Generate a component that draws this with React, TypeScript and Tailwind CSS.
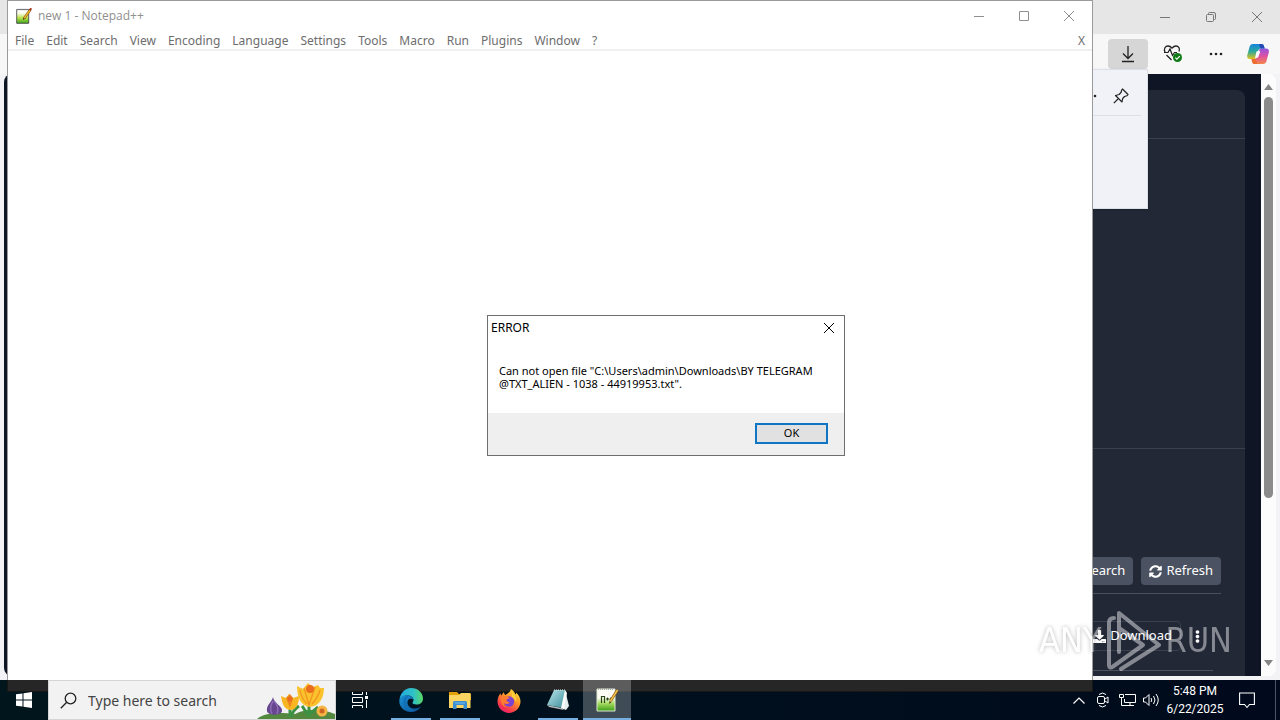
import React from 'react';
import { FaSyncAlt, FaSearch, FaDownload, FaEllipsisV } from 'react-icons/fa';

const MENUS = ['File', 'Edit', 'Search', 'View', 'Encoding', 'Language', 'Settings', 'Tools', 'Macro', 'Run', 'Plugins', 'Window', '?'];

const MinimizeIcon = () => (
  <svg width="10" height="10" viewBox="0 0 10 10" stroke="currentColor" fill="none"><path d="M0 5.5h10" /></svg>
);

const MaximizeIcon = () => (
  <svg width="10" height="10" viewBox="0 0 10 10" stroke="currentColor" fill="none"><path d="M.5.5h9v9h-9z" /></svg>
);

const RestoreIcon = () => (
  <svg width="10" height="10" viewBox="0 0 10 10" stroke="currentColor" fill="none">
    <rect x=".5" y="2.5" width="7" height="7" rx="1" />
    <path d="M2.5 2V1.500Q2.500 .5 3.500 .5H8Q9.500 .5 9.500 2V6.500Q9.500 7.500 8.500 7.500H8" />
  </svg>
);

const CloseIcon = () => (
  <svg width="10" height="10" viewBox="0 0 10 10" stroke="currentColor" fill="none"><path d="M0 0l10 10M10 0L0 10" /></svg>
);

const NotepadPlusSmall = () => (
  <svg width="16" height="16" viewBox="0 0 16 16">
    <defs>
      <linearGradient id="nppSmall" x1="0" y1="0" x2="0" y2="1">
        <stop offset=".25" stopColor="#fdfdf5" />
        <stop offset=".6" stopColor="#b9e34a" />
        <stop offset="1" stopColor="#3fa51c" />
      </linearGradient>
    </defs>
    <path d="M.7 1.500h12v13.800H.7z" fill="url(#nppSmall)" stroke="#4b4b4b" strokeWidth=".9" />
    <path d="M1.500 1.500h10.500" stroke="#8c8c9c" strokeWidth="1.600" strokeDasharray="1 1" />
    <path d="M14.500 1.500L8 10.500" stroke="#7d4d12" strokeWidth="2.400" />
    <path d="M14.500 1.500L8 10.500" stroke="#f3b92c" strokeWidth="1.300" />
    <path d="M13.800 2.300l1.400-2" stroke="#a53122" strokeWidth="2" />
    <path d="M7 12l.4-2.200 1.500 1z" fill="#3b2a10" />
  </svg>
);

const NotepadPlusLarge = () => (
  <svg width="24" height="24" viewBox="0 0 24 24">
    <defs>
      <linearGradient id="nppLarge" x1="0" y1="0" x2="0" y2="1">
        <stop offset=".4" stopColor="#fbfcf4" />
        <stop offset=".65" stopColor="#a8dc62" />
        <stop offset="1" stopColor="#3c9f17" />
      </linearGradient>
    </defs>
    <path d="M2 1h18v22H2z" fill="url(#nppLarge)" stroke="#dfe8d6" />
    <path d="M3 1.500h16" stroke="#a5a5aa" strokeDasharray="1 1" />
    <path d="M6.500 8v7M6.500 8.500h3V15M11 11h3M12.500 9.500v3M14.500 11h3M16 9.500v3" fill="none" stroke="#294416" strokeWidth="1.200" />
    <path d="M22.500 2l-7 11" stroke="#8a5716" strokeWidth="2.800" />
    <path d="M22.500 2l-7 11" stroke="#f3c04a" strokeWidth="1.500" />
    <path d="M14 16l.5-3 2 1.200z" fill="#55400f" />
  </svg>
);

const DotsIcon = () => (
  <svg width="14" height="4" viewBox="0 0 14 4" fill="#222"><circle cx="2" cy="2" r="1.300" /><circle cx="7" cy="2" r="1.300" /><circle cx="12" cy="2" r="1.300" /></svg>
);

const DownloadArrow = () => (
  <svg width="14" height="18" viewBox="0 0 14 18" fill="none" stroke="#222" strokeWidth="1.300">
    <path d="M7 1v12.500M2 8.500l5 5 5-5M1 16.500h12" />
  </svg>
);

const HealthIcon = () => (
  <svg width="20" height="18" viewBox="0 0 20 18" fill="none">
    <path d="M2 7.500C.3 3.500 2.500 1 5 1c2 0 3 1 4 2.200C10 2 11 1 13 1c2.500 0 4.300 2.500 3 5.500M3.500 10L8.500 15" stroke="#222" strokeWidth="1.300" />
    <path d="M1 7.500h4l2-3.500 2.500 6.500L11.500 7.500h2.500" stroke="#222" strokeWidth="1.200" />
    <circle cx="14.500" cy="12.500" r="4.500" fill="#0f7b16" />
    <path d="M12.300 12.700l1.600 1.500 2.900-3" stroke="#fff" strokeWidth="1.100" />
  </svg>
);

const CopilotIcon = () => (
  <svg width="22" height="20" viewBox="0 0 22 20">
    <defs>
      <linearGradient id="copA" x1="0" y1="0" x2="0" y2="1">
        <stop offset="0" stopColor="#1683df" />
        <stop offset=".5" stopColor="#2ea99a" />
        <stop offset="1" stopColor="#e2c31c" />
      </linearGradient>
      <linearGradient id="copB" x1="0" y1="0" x2="0" y2="1">
        <stop offset="0" stopColor="#9252e3" />
        <stop offset=".5" stopColor="#e0519f" />
        <stop offset="1" stopColor="#f4884a" />
      </linearGradient>
    </defs>
    <path d="M6 0h8.500c1.500 0 2 .8 2.400 2l.8 2.500h-3.500c-2 0-2.700 1-3.300 3l-1.700 5.500c-.4 1.500-1.200 2-2.500 2H3C.5 15-.2 13 .3 11L2.500 3C3 1 4 0 6 0z" fill="url(#copA)" />
    <path d="M16 20H8c-1.700 0-2.400-.8-2.800-2.300L4.500 15h2.700c1.700 0 2.500-1 3-2.700l1.800-6C12.500 5 13.200 4.500 14.500 4.500H19c2.500 0 3.300 2 2.800 4L19.500 17c-.5 2-1.500 3-3.500 3z" fill="url(#copB)" />
    <path d="M12 0h2.500c1.500 0 2 .8 2.400 2l.8 2.500h-4.200z" fill="#2448b6" />
    <path d="M9.500 7.500l3-1 .5 2-2 5L8 14z" fill="#fff" />
    <path d="M4.500 15h4l2 5H8c-1.700 0-2.400-.8-2.800-2.300z" fill="#ee6c2f" />
  </svg>
);

const PinIcon = () => (
  <svg width="16" height="16" viewBox="0 0 16 16" fill="none" stroke="#222" strokeWidth="1.200" strokeLinejoin="round">
    <path d="M9.500 1l5.500 5.500-1 1.200-2.500.8-1.800 2-.7 3.500-6.500-6.500 3.500-1 2-2 .7-2.500zM5 11L.8 15.200" />
  </svg>
);

function BrowserWindow() {
  return (
    <section className="flex min-h-0 flex-1 flex-col bg-[#f3f3f5]" aria-label="Browser">
      <div className="flex h-[34px] justify-end bg-[#e6e6e6] text-[#777]">
        <button aria-label="Minimize" className="flex w-[46px] items-center justify-center"><MinimizeIcon /></button>
        <button aria-label="Restore" className="flex w-[46px] items-center justify-center"><RestoreIcon /></button>
        <button aria-label="Close" className="flex w-[46px] items-center justify-center"><CloseIcon /></button>
      </div>
      <div className="flex h-10 items-center justify-end gap-1 bg-[#f7f7f7] pr-1">
        <button aria-label="Downloads" className="flex h-[30px] w-10 items-center justify-center rounded bg-[#d6d6d6]"><DownloadArrow /></button>
        <button aria-label="Browser essentials" className="flex h-[30px] w-10 items-center justify-center pl-0.5"><HealthIcon /></button>
        <button aria-label="Settings and more" className="flex h-[30px] w-10 items-center justify-center"><DotsIcon /></button>
        <button aria-label="Copilot" className="flex h-[30px] w-9 items-center justify-center"><CopilotIcon /></button>
      </div>

      <div className="mr-1 mb-1 ml-1 flex min-h-0 flex-1 overflow-hidden rounded-lg bg-white">
        <div className="flex min-w-0 flex-1 flex-col bg-[#0f1524] px-4 pt-4">
          <div className="flex min-h-0 flex-1 flex-col rounded-t-lg bg-[#222836] text-white">
            <div className="h-[49px] shrink-0 border-b border-[#3a404e]" />
            <div className="h-[310px] shrink-0 border-b border-[#3a404e]" />
            <div className="flex min-h-0 flex-1 flex-col px-6 pt-[108px] text-[13px]">
              <div className="flex justify-end gap-2 border-b border-[#4a505e] pb-2">
                <button className="flex h-7 items-center gap-1 rounded bg-[#4b5261] px-2"><FaSearch size={13} />Search</button>
                <button className="flex h-7 items-center gap-1 rounded bg-[#4b5261] px-2"><FaSyncAlt size={13} />Refresh</button>
              </div>
              <div className="mr-2 flex items-center justify-end border-b border-[#4a505e] pt-[27px] pb-[19px]">
                <button className="flex h-[30px] items-center gap-1 rounded border border-[#3a404e] px-2"><FaDownload size={13} />Download</button>
                <button aria-label="More" className="flex h-[30px] w-8 items-center justify-center"><FaEllipsisV size={13} /></button>
              </div>
            </div>
          </div>
        </div>
        <div className="flex w-[15px] flex-col items-center bg-[#fcfcfc] pt-2.5 pb-2.5">
          <svg width="9" height="6" viewBox="0 0 9 6" fill="#858585"><path d="M4.500 0L9 6H0z" /></svg>
          <div className="mt-[7px] h-[401px] w-[9px] rounded-full bg-[#8b8b8b]" />
          <svg className="mt-auto" width="9" height="6" viewBox="0 0 9 6" fill="#858585"><path d="M4.500 6L0 0h9z" /></svg>
        </div>
      </div>
    </section>
  );
}

function DownloadsFlyout() {
  return (
    <div className="absolute top-[69px] right-[132px] h-[140px] w-[360px] border border-[#dcdfe4] bg-[#f0f2f7] pr-1.5 shadow-sm">
      <div className="flex h-[46px] items-center justify-end gap-4 border-b border-[#dde0e6] pt-1.5 pr-3">
        <DotsIcon />
        <button aria-label="Pin downloads"><PinIcon /></button>
      </div>
    </div>
  );
}

function NotepadWindow() {
  return (
    <section className="absolute top-0 right-[187px] bottom-[28px] left-[7px] flex flex-col border border-[#9b9b9b] bg-white text-xs" aria-label="Notepad++">
      <div className="flex h-[29px] items-center text-[#8f8f8f]">
        <div className="flex flex-1 items-center gap-1.5 pl-2">
          <NotepadPlusSmall />
          <span className="font-['Open_Sans',sans-serif]">new 1 - Notepad++</span>
        </div>
        <button aria-label="Minimize" className="flex h-full w-[45px] items-center justify-center"><MinimizeIcon /></button>
        <button aria-label="Maximize" className="flex h-full w-[45px] items-center justify-center"><MaximizeIcon /></button>
        <button aria-label="Close" className="flex h-full w-[46px] items-center justify-center"><CloseIcon /></button>
      </div>
      <nav className="flex h-[21px] items-center border-b-2 border-[#f0f0f0] pt-0.5 pl-px text-[#6d6d6d]">
        {MENUS.map((m) => (
          <button key={m} className="px-1.5">{m}</button>
        ))}
        <button aria-label="Close document" className="mr-[7px] ml-auto">X</button>
      </nav>
    </section>
  );
}

function ErrorDialog() {
  return (
    <div role="alertdialog" aria-labelledby="err-title" className="absolute top-[315px] left-[487px] w-[358px] border border-[#6e6e6e] bg-white text-black">
      <div className="flex h-6 items-center justify-between pr-2.5 pl-[3px]">
        <h1 id="err-title" className="text-xs">ERROR</h1>
        <button aria-label="Close"><CloseIcon /></button>
      </div>
      <p className="h-[73px] pt-6 pl-[11px] text-[11px] leading-[13px] whitespace-nowrap">
        Can not open file "C:\Users\admin\Downloads\BY TELEGRAM<br />
        @TXT_ALIEN - 1038 - 44919953.txt".
      </p>
      <div className="flex h-[42px] items-start justify-end bg-[#efefef] pt-2.5 pr-4">
        <button className="flex h-[21px] w-[73px] items-center justify-center border-2 border-[#0f76c6] bg-[#e1e1e1] text-[11px]">OK</button>
      </div>
    </div>
  );
}

function Watermark() {
  return (
    <div className="pointer-events-none absolute right-12 bottom-12 flex items-center gap-1 font-['DejaVu_Sans_Condensed',sans-serif] text-[34px] text-white opacity-45">
      <span className="drop-shadow-[0_0_2px_#666]">ANY</span>
      <svg width="56" height="64" viewBox="0 0 56 64" fill="none" stroke="#fff" strokeWidth="4" strokeLinejoin="round" strokeLinecap="round">
        <path d="M14 44V5l40 32L16 61" />
        <path d="M9 10q-5 0-5 5v42q0 4 4 1.500L38 37 14 20" />
      </svg>
      <span>RUN</span>
    </div>
  );
}

const Flowers = () => (
  <svg width="78" height="38" viewBox="0 0 78 38" className="self-end">
    <path d="M0 38C10 30 25 32 38 33 50 27 66 28 78 33v5z" fill="#55883f" />
    <path d="M16 16c-1 5-7 8-6 14 1 5 14 5 15 0 1-5-8-7-9-14z" fill="#67458f" />
    <path d="M16 20c-3 5-3 9-1 13M17 20c4 4 5 8 3 13" stroke="#8d6bb3" strokeWidth="1.500" fill="none" />
    <path d="M33 28v8M52 24v12M34 36c2-7 5-9 8-11M52 34c-4-3-5-7-7-9M52 33c4-2 6-5 9-7" stroke="#3d9143" strokeWidth="3" fill="none" />
    <path d="M24 15l5 2 3-4 4 4 6-2c0 7-2 13-8 14-7 0-9-7-10-14z" fill="#f7b622" />
    <path d="M29 17l4 10 3-10-3-4z" fill="#ee851e" />
    <path d="M40 5l6 3 5-6 5 4 5-2 2 3 4 0c0 9-4 18-14 19C43 25 40 15 40 5z" fill="#fac22c" />
    <path d="M47 7l5 17 6-18M43 9c1 7 4 11 7 14M63 9c-2 7-5 11-8 14" stroke="#f29420" strokeWidth="1.300" fill="none" />
    <circle cx="53" cy="8" r="4" fill="#e96d1d" />
    <circle cx="33" cy="18" r="2.500" fill="#e96d1d" />
    <circle cx="65" cy="30" r="5.500" fill="#f5b545" />
    <circle cx="65" cy="30" r="2.500" fill="#cf6422" />
  </svg>
);

const EdgeIcon = () => (
  <svg width="24" height="24" viewBox="0 0 24 24">
    <defs>
      <linearGradient id="edgeTop" x1="0" y1="0" x2="1" y2="0">
        <stop offset="0" stopColor="#21a9de" />
        <stop offset=".6" stopColor="#2fc2c7" />
        <stop offset="1" stopColor="#5bd765" />
      </linearGradient>
      <linearGradient id="edgeLow" x1="0" y1="0" x2="1" y2="1">
        <stop offset="0" stopColor="#1b93d8" />
        <stop offset="1" stopColor="#0b4b91" />
      </linearGradient>
    </defs>
    <path d="M.5 12C1 5 6 0 12 0c7 0 12 5 12 10.500 0 4-3 6-6.500 6-2.500 0-4-.8-4-1.700 0-.7 1-1.200 1-3C14.500 9.500 12 7.500 8.500 7.500 4.500 7.500 1.500 9.500.5 12z" fill="url(#edgeTop)" />
    <path d="M.3 12.500C1 9.500 4 7.500 8 7.500c3.500 0 6.500 2 6.500 4.500-1-1.200-2.500-1.500-3.500-1.200-2 .7-2.700 2.500-2.500 4.200.4 3.500 4 6 8 5.500 2.500-.2 4-1 5.500-2C20 22 16.500 24 12 24 5.500 24-.2 19 .3 12.500z" fill="url(#edgeLow)" />
    <path d="M4.500 13c0-3 2-5 5-5-2 2-3 4-2.500 7 .7 4 4 7 8 7.500C9 24.500 4.500 19 4.500 13z" fill="#116fb5" />
  </svg>
);

const ExplorerIcon = () => (
  <svg width="22" height="20" viewBox="0 0 22 20">
    <path d="M0 2h8l2 2h12v6H0z" fill="#e3a008" />
    <path d="M0 5h10l2-2h9.500v15H0z" fill="#fcd462" />
    <path d="M4 19v-6.500q0-1.500 1.500-1.500h11Q18 11 18 12.500V19h-3.500v-4h-7v4z" fill="#3b8ecf" />
    <path d="M6 13h10" stroke="#79bbec" />
  </svg>
);

const FirefoxIcon = () => (
  <svg width="24" height="24" viewBox="0 0 24 24">
    <defs>
      <linearGradient id="ffx" x1=".8" y1="0" x2=".2" y2="1">
        <stop offset="0" stopColor="#ffe63f" />
        <stop offset=".4" stopColor="#ff9427" />
        <stop offset=".8" stopColor="#f8324f" />
        <stop offset="1" stopColor="#dd2278" />
      </linearGradient>
    </defs>
    <path d="M14 0c3 2 4 4 4.300 5.500C19.500 5 19 4 19 3.500c3 2.500 4.500 6 4.500 9C23.500 19 18 24 12 24S.5 19 .5 12.500C.5 9 2 6 3.500 4c0 1 .2 2 .7 2.500L7 3c0 1.500.5 2.500 1.500 3C10 4.500 13 4 14 0z" fill="url(#ffx)" />
    <circle cx="12" cy="12.500" r="5.200" fill="#7b43cf" />
    <path d="M4 8.500C7 6.500 11 7 13 9.500c-2 0-3 .5-3.500 1.500 0 2 3 2 3 2-.5 2.500-4 2.500-6 1 .5 3 3 4 5.500 4-5 1.500-9-3-8-9.500z" fill="#ff7b30" />
    <path d="M15 3c3 3 5 6 4 10-.5-2-1.500-4-4-5z" fill="#ffd13b" />
  </svg>
);

const NotepadIcon = () => (
  <svg width="24" height="24" viewBox="0 0 24 24">
    <defs>
      <linearGradient id="pad" x1="0" y1="0" x2="1" y2="1">
        <stop offset="0" stopColor="#b9e6ea" />
        <stop offset="1" stopColor="#3f8f9b" />
      </linearGradient>
    </defs>
    <path d="M19 2l4 16-3 4-5-2z" fill="#e4eceb" />
    <path d="M8 2l11 0-1 18L1 17z" fill="url(#pad)" />
    <path d="M19 2l2 3-3 16-3-1z" fill="#f8fbfa" />
    <path d="M1 17l15 3 2 2L3 19z" fill="#b0b9b8" />
    <path d="M8 2h12" stroke="#dce5e4" strokeDasharray="1 1" />
  </svg>
);

const TASKS = [
  { name: 'Microsoft Edge', icon: <EdgeIcon />, open: true, active: false },
  { name: 'File Explorer', icon: <ExplorerIcon />, open: true, active: false },
  { name: 'Firefox', icon: <FirefoxIcon />, open: false, active: false },
  { name: 'Notepad', icon: <NotepadIcon />, open: true, active: false },
  { name: 'Notepad++', icon: <NotepadPlusLarge />, open: true, active: true },
];

function Taskbar() {
  return (
    <footer className="relative flex h-10 shrink-0 bg-black/85 text-white">
      <button aria-label="Start" className="flex w-12 items-center justify-center">
        <svg width="16" height="16" viewBox="0 0 16 16" fill="#fff"><path d="M0 2.300l6.500-.9v6.100H0zM7.500 1.200L16 0v7.500H7.500zM0 8.500h6.500v6.100L0 13.700zM7.500 8.500H16V16l-8.500-1.200z" /></svg>
      </button>
      <label className="flex w-72 items-center border border-[#d5d5d5] bg-[#f2f2f2] pl-[11px] text-[#333]">
        <svg width="17" height="17" viewBox="0 0 17 17" fill="none" stroke="#222" strokeWidth="1.300"><circle cx="10.500" cy="6.500" r="5.300" /><path d="M6.700 10.300L.8 16.200" /></svg>
        <input aria-label="Type here to search" placeholder="Type here to search" className="ml-[11px] min-w-0 flex-1 bg-transparent pt-0.5 text-sm outline-none placeholder:text-[#444]" />
        <Flowers />
      </label>
      <button aria-label="Task view" className="flex w-12 items-center justify-center">
        <svg width="16" height="16" viewBox="0 0 16 16" fill="none" stroke="#fff"><path d="M.5 0v2.500h10V0M.5 5.500h10v5H.5zM.5 16v-2.500h10V16M14.500 0v3M14.500 8v8" /><path d="M13 4h3v3h-3z" fill="#fff" stroke="none" /></svg>
      </button>
      <div className="ml-[3px] flex gap-px">
        {TASKS.map((t) => (
          <button key={t.name} aria-label={t.name} className={`flex w-12 flex-col items-center ${t.active ? 'bg-white/25' : ''}`}>
            <span className="flex flex-1 items-center pt-0.5">{t.icon}</span>
            {t.open && <span className={`h-0.5 bg-[#76b0e2] ${t.active ? 'w-12' : 'w-10'}`} />}
          </button>
        ))}
      </div>
      <div className="ml-auto flex items-center">
        <button aria-label="Show hidden icons" className="flex w-6 justify-center">
          <svg width="12" height="7" viewBox="0 0 12 7" fill="none" stroke="#fff" strokeWidth="1.200"><path d="M.5 6.500L6 1l5.500 5.500" /></svg>
        </button>
        <button aria-label="Meet Now" className="flex w-6 justify-center">
          <svg width="14" height="16" viewBox="0 0 14 16" fill="none" stroke="#fff"><rect x="1.500" y="4.500" width="7" height="7" rx="1.500" /><path d="M9 7l3-2v6l-3-2M3 2.500q3.500-3 7 0M3 13.500q3.500 3 7 0" /></svg>
        </button>
        <button aria-label="Network" className="flex w-6 justify-center">
          <svg width="17" height="14" viewBox="0 0 17 14" fill="none" stroke="#fff"><path d="M6 1.500h10.500v8H5.500V6M7 12.500h8M11 10v2.500M.5 1.500h4v3h-4zM2.500 5v7.500H7" /></svg>
        </button>
        <button aria-label="Volume" className="flex w-6 justify-center">
          <svg width="17" height="14" viewBox="0 0 17 14" fill="none" stroke="#fff"><path d="M.5 5v4h2l3.500 3.500v-11L2.500 5zM8 5q1.500 2 0 4M10.500 3q3 4 0 8M13 1q4.500 6 0 12" /></svg>
        </button>
        <div className="w-16 text-center font-['Roboto',sans-serif] text-xs leading-[18px]">
          <div>5:48 PM</div>
          <div>6/22/2025</div>
        </div>
        <button aria-label="Notifications" className="mr-2 flex w-10 justify-center">
          <svg width="16" height="17" viewBox="0 0 16 17" fill="none" stroke="#fff" strokeWidth="1.100"><path d="M.6 1h14.800v11.500h-4.900L8 15.500l-2.500-3H.6z" /></svg>
        </button>
        <div className="h-10 w-[5px] border-l border-[#4b5563]" />
      </div>
    </footer>
  );
}

export default function App() {
  return (
    <main className="relative flex h-screen flex-col overflow-hidden bg-linear-to-r from-[#0d90c4] to-[#0742bb] font-['Noto_Sans',sans-serif]">
      <BrowserWindow />
      <DownloadsFlyout />
      <NotepadWindow />
      <ErrorDialog />
      <Taskbar />
      <Watermark />
    </main>
  );
}
